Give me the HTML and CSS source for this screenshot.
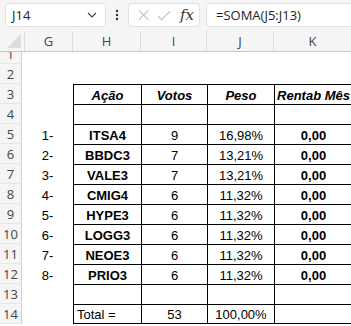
FILE: index.html
```html
<!DOCTYPE html>
<html lang="pt">
<head>
  <meta charset="UTF-8">
  <title>Carteira</title>
  <link rel="stylesheet" href="styles.css">
</head>
<body>
  <!-- Formula bar -->
  <div class="formula-bar">
    <div class="name-box">
      <span>J14</span>
      <svg width="10" height="6" viewBox="0 0 10 6"><path d="M1 1l4 4 4-4" fill="none" stroke="#444" stroke-width="1.2"/></svg>
    </div>
    <div class="dots">
      <svg width="4" height="12" viewBox="0 0 4 12"><circle cx="2" cy="2" r="1.2" fill="#333"/><circle cx="2" cy="6" r="1.2" fill="#333"/><circle cx="2" cy="10" r="1.2" fill="#333"/></svg>
    </div>
    <div class="fx-box">
      <svg width="12" height="12" viewBox="0 0 12 12"><path d="M1 1l10 10M11 1L1 11" stroke="#bdbdbd" stroke-width="1.1" fill="none"/></svg>
      <svg width="15" height="11" viewBox="0 0 15 11"><path d="M1 6l4 4 9-9" stroke="#bdbdbd" stroke-width="1.1" fill="none"/></svg>
      <span class="fx">fx</span>
    </div>
    <div class="formula">=SOMA(J5:J13)</div>
  </div>

  <!-- Column headers -->
  <div class="col-heads">
    <div class="corner"><svg width="14" height="14" viewBox="0 0 14 14"><path d="M14 0V14H0Z" fill="#dcdcdc"/></svg></div>
    <div class="ch w-g">G</div>
    <div class="ch w-h">H</div>
    <div class="ch w-i">I</div>
    <div class="ch w-j">J</div>
    <div class="ch w-k">K</div>
  </div>

  <div class="sheet">
    <div class="row first"><div class="rh">1</div></div>
    <div class="row"><div class="rh">2</div></div>
    <div class="row">
      <div class="rh">3</div><div class="c w-g"></div>
      <div class="c w-h t head">Ação</div><div class="c w-i t head">Votos</div>
      <div class="c w-j t head">Peso</div><div class="c w-k t head">Rentab Mês</div>
    </div>
    <div class="row">
      <div class="rh">4</div><div class="c w-g"></div>
      <div class="c w-h t"></div><div class="c w-i t"></div><div class="c w-j t"></div><div class="c w-k t"></div>
    </div>
    <div class="row">
      <div class="rh">5</div><div class="c w-g">1-</div>
      <div class="c w-h t b">ITSA4</div><div class="c w-i t">9</div><div class="c w-j t">16,98%</div><div class="c w-k t b">0,00</div>
    </div>
    <div class="row">
      <div class="rh">6</div><div class="c w-g">2-</div>
      <div class="c w-h t b">BBDC3</div><div class="c w-i t">7</div><div class="c w-j t">13,21%</div><div class="c w-k t b">0,00</div>
    </div>
    <div class="row">
      <div class="rh">7</div><div class="c w-g">3-</div>
      <div class="c w-h t b">VALE3</div><div class="c w-i t">7</div><div class="c w-j t">13,21%</div><div class="c w-k t b">0,00</div>
    </div>
    <div class="row">
      <div class="rh">8</div><div class="c w-g">4-</div>
      <div class="c w-h t b">CMIG4</div><div class="c w-i t">6</div><div class="c w-j t">11,32%</div><div class="c w-k t b">0,00</div>
    </div>
    <div class="row">
      <div class="rh">9</div><div class="c w-g">5-</div>
      <div class="c w-h t b">HYPE3</div><div class="c w-i t">6</div><div class="c w-j t">11,32%</div><div class="c w-k t b">0,00</div>
    </div>
    <div class="row">
      <div class="rh">10</div><div class="c w-g">6-</div>
      <div class="c w-h t b">LOGG3</div><div class="c w-i t">6</div><div class="c w-j t">11,32%</div><div class="c w-k t b">0,00</div>
    </div>
    <div class="row">
      <div class="rh">11</div><div class="c w-g">7-</div>
      <div class="c w-h t b">NEOE3</div><div class="c w-i t">6</div><div class="c w-j t">11,32%</div><div class="c w-k t b">0,00</div>
    </div>
    <div class="row">
      <div class="rh">12</div><div class="c w-g">8-</div>
      <div class="c w-h t b">PRIO3</div><div class="c w-i t">6</div><div class="c w-j t">11,32%</div><div class="c w-k t b">0,00</div>
    </div>
    <div class="row">
      <div class="rh">13</div><div class="c w-g"></div>
      <div class="c w-h t"></div><div class="c w-i t"></div><div class="c w-j t"></div><div class="c w-k t"></div>
    </div>
    <div class="row last">
      <div class="rh">14</div><div class="c w-g"></div>
      <div class="c w-h t left">Total =</div><div class="c w-i t">53</div><div class="c w-j t">100,00%</div><div class="c w-k t"></div>
    </div>
  </div>
</body>
</html>
```

FILE: styles.css
```css
* {
  margin: 0;
  padding: 0;
  box-sizing: border-box;
}

body {
  width: 351px;
  height: 326px;
  overflow: hidden;
  background: #fff;
  font-family: "Liberation Sans", Arial, sans-serif;
  color: #000;
}

/* Formula bar */
.formula-bar {
  display: flex;
  align-items: center;
  height: 31px;
  padding: 2px 0 3px 5px;
  background: #f5f5f5;
  font-family: "Open Sans", "Noto Sans", sans-serif;
  font-size: 13px;
  color: #222;
}

.name-box,
.fx-box,
.formula {
  height: 24px;
  background: #fff;
  border: 1px solid #e1e1e1;
  border-radius: 4px;
  display: flex;
  align-items: center;
}

.name-box {
  width: 101px;
  padding: 0 8px 0 6px;
  justify-content: space-between;
}

.dots {
  width: 22px;
  display: flex;
  justify-content: center;
}

.fx-box {
  width: 72px;
  padding: 0 5px 0 9px;
  gap: 8px;
}

.fx {
  font-family: "DejaVu Serif", "Liberation Serif", serif;
  font-style: italic;
  font-size: 15px;
  color: #333;
  margin-left: 1px;
}

.formula {
  flex: 1;
  margin-left: 6px;
  padding-left: 9px;
  border-right: none;
  border-radius: 4px 0 0 4px;
}

/* Column headers */
.col-heads {
  display: flex;
  height: 21px;
  background: #f5f5f5;
  border-bottom: 1px solid #c6c6c6;
  font-family: "Open Sans", "Noto Sans", sans-serif;
  font-size: 13px;
  color: #444;
}

.corner {
  width: 25px;
  border-right: 1px solid #dcdcdc;
  display: flex;
  align-items: flex-end;
  justify-content: flex-end;
  padding: 0 3px 3px 0;
}

.ch {
  display: flex;
  align-items: center;
  justify-content: center;
  border-right: 1px solid #dcdcdc;
}

.ch.w-g { width: 48px; }
.ch.w-k { flex: 1; border-right: none; }

/* Sheet */
.sheet {
  height: 274px;
  overflow: hidden;
}

.row {
  display: flex;
  height: 20px;
}

.row.first {
  margin-top: -8px;
}

.rh {
  width: 22px;
  flex: none;
  background: #f5f5f5;
  border-right: 1px solid #cfcfcf;
  border-bottom: 1px solid #e6e6e6;
  font-family: "Open Sans", "Noto Sans", sans-serif;
  font-size: 13px;
  color: #444;
  display: flex;
  align-items: center;
  justify-content: center;
}

.c {
  flex: none;
  display: flex;
  align-items: flex-end;
  justify-content: center;
  font-size: 13px;
  line-height: 16px;
  white-space: nowrap;
}

.w-g { width: 51px; }
.w-h { width: 68px; }
.w-i { width: 66px; }
.w-j { width: 67px; }
.w-k { width: 78px; }

/* table borders */
.t {
  border-left: 1px solid #000;
  border-top: 1px solid #000;
}

.last .t {
  border-bottom: 1px solid #000;
}

.head {
  font-weight: bold;
  font-style: italic;
}

.b {
  font-weight: bold;
}

.left {
  justify-content: flex-start;
  padding-left: 3px;
}
```
